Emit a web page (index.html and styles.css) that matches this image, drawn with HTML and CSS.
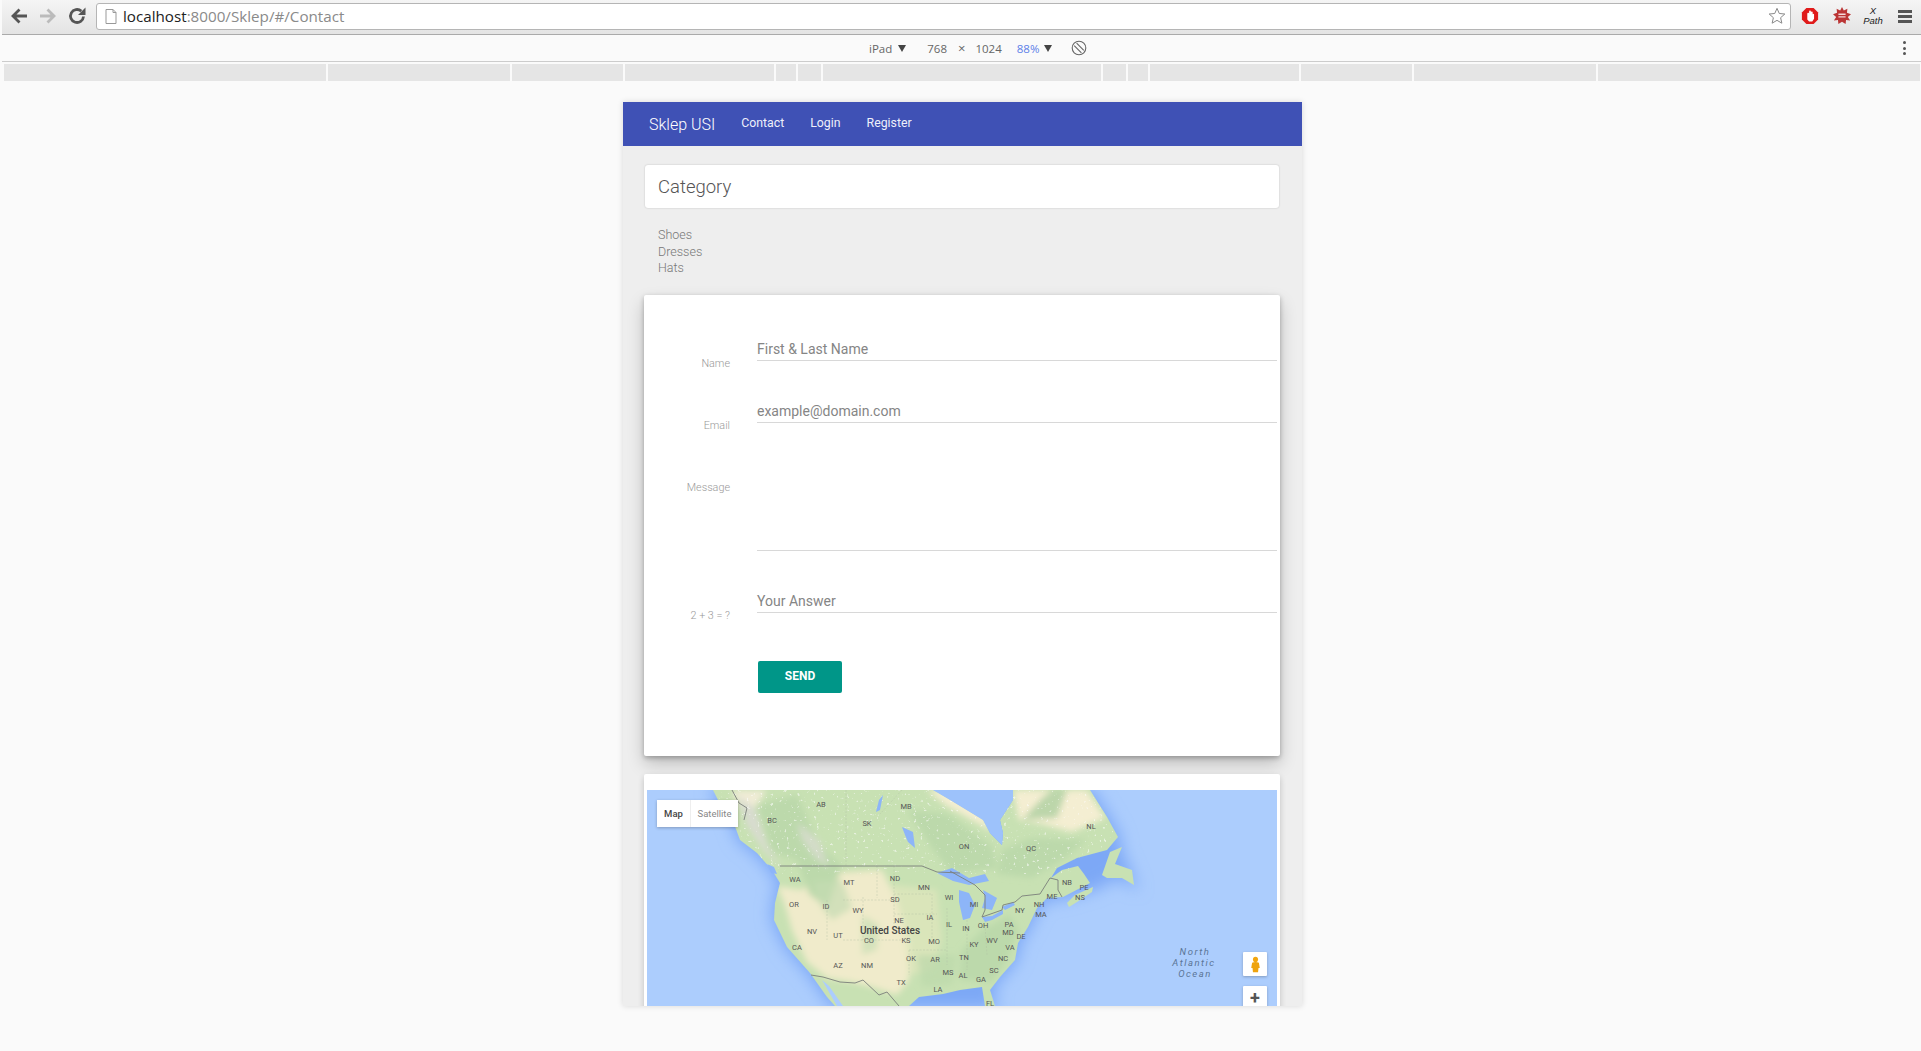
FILE: index.html
```html
<!DOCTYPE html>
<html lang="en">
<head>
    <meta charset="UTF-8">
    <title>Sklep USI - Contact</title>
    <link rel="stylesheet" href="styles.css">
</head>
<body>
    <div class="toolbar">
        <svg class="tool-icon" viewBox="0 0 20 20"><path d="M18 10H5M10.500 3.500L4 10l6.500 6.500" fill="none" stroke="#555" stroke-width="2.800"/></svg>
        <svg class="tool-icon" viewBox="0 0 20 20"><path d="M2 10h13M9.500 3.500L16 10l-6.500 6.500" fill="none" stroke="#bbb" stroke-width="2.800"/></svg>
        <svg class="tool-icon" viewBox="0 0 20 20"><path d="M16.500 10.500a6.500 6.500 0 1 1-2.200-5.400" fill="none" stroke="#555" stroke-width="2.800"/><path d="M11 9h7.500V1.500z" fill="#555"/></svg>
        <div class="address">
            <svg class="page-icon" viewBox="0 0 12 15"><path d="M1 .5h7l3 3v11H1zM8 .5v3h3" fill="#fff" stroke="#999"/></svg>
            <span class="host">localhost</span><span class="rest">:8000/Sklep/#/Contact</span>
            <svg class="star" viewBox="0 0 20 20"><path d="M10 1.500l2.500 5.700 6.200.6-4.700 4.100 1.400 6.100L10 14.800 4.600 18l1.400-6.100L1.300 7.800l6.200-.6z" fill="#fff" stroke="#888" stroke-width="1.100"/></svg>
        </div>
        <svg class="ext-icon ext-first" viewBox="0 0 20 20"><path d="M6 1h8l5 5v8l-5 5H6l-5-5V6z" fill="#e01b1b"/><path d="M7 14V7.500a1 1 0 0 1 2 0V5a1 1 0 0 1 2 0v1a1 1 0 0 1 2 0v2a1 1 0 0 1 1.500 0V13l-2 3H9z" fill="#fff"/></svg>
        <svg class="ext-icon" viewBox="0 0 20 20"><path d="M10 0l2 4 4-2-.5 4.500L20 8l-3.500 3 2.500 4-4.500-.5L14 19l-4-2.500L6 19l-.5-4.500L1 15l2.500-4L0 8l4.500-1.500L4 2l4 2z" fill="#bb3535"/><path d="M6 8h8M6 11h8" stroke="#f5d8d8" stroke-width="1.600"/></svg>
        <div class="xpath">X<br>Path</div>
        <div class="menu-icon"><i></i><i></i><i></i></div>
    </div>

    <div class="device-bar">
        <span class="device-name">iPad</span><span class="caret"></span>
        <span class="dim dim-w">768</span><span class="times">×</span><span class="dim">1024</span>
        <span class="zoom-val">88%</span><span class="caret caret-zoom"></span>
        <svg class="rotate" viewBox="0 0 16 16"><circle cx="8" cy="8" r="6.800" fill="none" stroke="#666" stroke-width="1.100"/><path d="M3.200 5.600l7.200 7.200M5.600 3.200l7.200 7.200" stroke="#666" stroke-width="1.100"/></svg>
        <div class="kebab"><i></i><i></i><i></i></div>
    </div>

    <div class="ruler">
        <div class="seg seg-a"></div>
        <div class="seg seg-b"></div>
        <div class="seg seg-c"></div>
        <div class="seg seg-d"></div>
        <div class="seg seg-e"></div>
        <div class="seg seg-f"></div>
        <div class="seg seg-g"></div>
        <div class="seg seg-f"></div>
        <div class="seg seg-e"></div>
        <div class="seg seg-d"></div>
        <div class="seg seg-c"></div>
        <div class="seg seg-b"></div>
        <div class="seg seg-l"></div>
    </div>

    <div class="stage">
        <div class="device">
            <nav class="navbar">
                <a class="brand">Sklep USI</a>
                <a class="nav-link">Contact</a>
                <a class="nav-link">Login</a>
                <a class="nav-link">Register</a>
            </nav>
            <div class="content">
                <div class="category-box">Category</div>
                <ul class="category-list">
                    <li>Shoes</li>
                    <li>Dresses</li>
                    <li>Hats</li>
                </ul>
                <form class="contact-card">
                    <div class="form-row">
                        <label>Name</label>
                        <div class="field">First &amp; Last Name</div>
                    </div>
                    <div class="form-row">
                        <label>Email</label>
                        <div class="field">example@domain.com</div>
                    </div>
                    <div class="form-row row-message">
                        <label>Message</label>
                        <div class="field field-area"></div>
                    </div>
                    <div class="form-row">
                        <label>2 + 3 = ?</label>
                        <div class="field">Your Answer</div>
                    </div>
                    <button class="send" type="button">SEND</button>
                </form>
                <div class="map-card">
                    <div class="map">
                        <svg class="map-svg" viewBox="0 0 630 216">
                            <defs>
                                <filter id="glow" x="-20%" y="-20%" width="140%" height="140%"><feGaussianBlur stdDeviation="8"/></filter>
                                <filter id="soft" x="-20%" y="-20%" width="140%" height="140%"><feGaussianBlur stdDeviation="3"/></filter>
                                <filter id="edge"><feGaussianBlur stdDeviation="0.500"/></filter>
                                <filter id="specks" x="0" y="0" width="100%" height="100%">
                                    <feTurbulence type="fractalNoise" baseFrequency="0.3" numOctaves="2" seed="7"/>
                                    <feColorMatrix values="0 0 0 0 1  0 0 0 0 1  0 0 0 0 1  0 0 0 9 -6.100"/>
                                    <feGaussianBlur stdDeviation="0.500"/>
                                </filter>
                                <clipPath id="land-clip">
                                    <path d="M66 0L75 18L83 23L93 50L110 63L125 80L133 93L128 113L127 130L140 157L163 183L180 207L188 216H262L272 207L296 204L313 200L335 197L338 216H348L343 200L353 187L368 170L371 153L381 137L390 118L400 108L416 107L443 93L437 84L431 76L415 80L404 88L410 78L430 68L460 60L471 47L460 27L443 0H366V10L353 30L356 43L355 55L343 43L336 30L303 10L286 0Z"/>
                                </clipPath>
                            </defs>
                            <rect width="630" height="216" fill="#accdfd"/>
                            <path filter="url(#glow)" fill="#7da8f6" stroke="#7da8f6" stroke-width="5" d="M66 0L75 18L83 23L93 50L110 63L125 80L133 93L128 113L127 130L140 157L163 183L180 207L188 216H348L343 200L353 187L368 170L371 153L381 137L390 118L400 108L416 107L450 97L470 85L487 95L472 60L471 47L460 27L443 0Z"/>
                            <g filter="url(#edge)">
                                <path fill="#c8e1b3" d="M66 0L75 18L83 23L93 50L110 63L125 80L133 93L128 113L127 130L140 157L163 183L180 207L188 216H262L272 207L296 204L313 200L335 197L338 216H348L343 200L353 187L368 170L371 153L381 137L390 118L400 108L416 107L443 93L437 84L431 76L415 80L404 88L410 78L430 68L460 60L471 47L460 27L443 0H366V10L353 30L356 43L355 55L343 43L336 30L303 10L286 0Z"/>
                                <path fill="#9dc2fb" d="M286 0L303 10L336 30L343 43L355 55L356 43L353 30L366 10V0Z"/>
                                <path fill="#c8e1b3" d="M455 85L463 62L475 57L468 74L485 80L487 95L475 88L460 88Z"/>
                                <path fill="#c8e1b3" d="M420 113L428 105L446 97L445 102L430 112L422 117Z"/>
                            </g>
                            <g clip-path="url(#land-clip)">
                                <g filter="url(#soft)">
                                    <!-- tan of the US southwest -->
                                    <path fill="#f0ebcb" d="M130 96L155 100L170 84L200 82L235 80L250 110L262 150L262 190L250 205L225 197L205 192L180 188L160 172L145 140L138 115Z"/>
                                    <path fill="#e6e8c0" d="M245 95L290 100L295 150L285 180L262 185Z" opacity=".6"/>
                                    <!-- north, pale coast -->
                                    <path fill="#f4eed2" d="M366 0H440L458 28L425 42L395 34L372 30Z"/>
                                    <path fill="#f4eed2" d="M280 0H298L336 24L345 42L332 34L300 16Z"/>
                                    <path fill="#f0ecd6" d="M85 0H120L105 22L92 18Z"/>
                                    <!-- forest -->
                                    <path fill="#bcd9ab" d="M110 15L150 5L172 55L195 76L180 118L162 104L150 70L125 62Z"/>
                                    <path fill="#bcd9ab" d="M260 20L300 24L345 56L350 78L305 84L285 58Z"/>
                                    <path fill="#bcd9ab" d="M355 60L385 48L440 50L415 70L385 88L350 84Z"/>
                                    <path fill="#bcd9ab" d="M335 140L362 125L372 140L360 170L345 192L312 190L315 160Z"/>
                                    <path fill="#bcd9ab" d="M270 165L310 165L305 195L275 197Z" opacity=".7"/>
                                    <path fill="#c8deb4" d="M215 125L232 135L230 160L215 165Z" opacity=".7"/>
                                    <path fill="#c4dcb2" d="M165 92L195 90L205 118L185 130L175 118Z" opacity=".7"/>
                                    <path fill="#bcd6aa" d="M375 30L395 8L405 0H420L410 28Z"/>
                                    <!-- ranges -->
                                    <path fill="#d8dccf" d="M90 6L108 18L120 55L135 78L118 62L100 36Z"/>
                                    <path fill="#d3dcc8" d="M150 32L172 50L182 78L168 68L155 50Z"/>
                                </g>
                                <rect y="0" width="480" height="84" filter="url(#specks)" opacity=".55"/>
                            </g>
                            <g filter="url(#edge)" fill="#8db5f8">
                                <!-- lakes -->
                                <path d="M290 83L305 78L322 88L338 84L342 91L322 95L306 91Z"/>
                                <path d="M312 100L322 103L328 115L323 128L316 130L312 112Z"/>
                                <path d="M336 100L350 108L345 120L335 118L338 108Z"/>
                                <path d="M335 127L345 126L356 120L356 124L345 130L338 132Z"/>
                                <path d="M355 117L366 112L368 115L358 120Z"/>
                                <path d="M255 37L266 42L268 58L261 52L258 45Z"/>
                                <path d="M120 74L127 77L130 84L124 83Z"/>
                                <path d="M232 10L236 5L233 20L229 22Z"/>
                                <path d="M175 190L182 196L196 216H190Z" fill="#accdfd"/>
                            </g>
                            <g fill="none" stroke="#aebba0" stroke-width=".5" stroke-dasharray="2 1.500" opacity=".75">
                                <!-- state and province lines -->
                                <path d="M199 0V76M255 0L233 24M230 76V108M196 110H247M247 76V140M216 107V150M180 110V150M247 104H285M247 124H290M285 104V150M300 118V175M262 160H300M196 150H262M262 160V185M320 130V180M338 135L340 165"/>
                            </g>
                            <g fill="none" stroke="#7b7f7b" stroke-width=".9">
                                <path d="M85 0L92 13L100 18L97 30"/>
                                <path d="M133 76H275L290 82L313 83"/>
                                <path d="M303 81L328 95L338 105L338 120L335 127L355 120L356 115L368 112L375 106L393 104L403 88L411 90L411 100L415 107"/>
                                <path d="M164 185L176 187L193 192L208 193L216 190L232 205L240 202L252 216"/>
                            </g>
                            <g class="map-labels">
                                <text x="174" y="17">AB</text><text x="259" y="19">MB</text><text x="125" y="33">BC</text><text x="220" y="36">SK</text>
                                <text x="148" y="92">WA</text><text x="202" y="95">MT</text><text x="248" y="91">ND</text><text x="277" y="100">MN</text><text x="302" y="110">WI</text>
                                <text x="147" y="117">OR</text><text x="179" y="119">ID</text><text x="211" y="123">WY</text><text x="248" y="112">SD</text><text x="283" y="130">IA</text>
                                <text x="252" y="133">NE</text><text x="302" y="137">IL</text><text x="165" y="144">NV</text><text x="191" y="148">UT</text>
                                <text x="222" y="153">CO</text><text x="259" y="153">KS</text><text x="287" y="154">MO</text><text x="150" y="160">CA</text>
                                <text x="191" y="178">AZ</text><text x="220" y="178">NM</text><text x="264" y="171">OK</text><text x="288" y="172">AR</text><text x="301" y="185">MS</text>
                                <text x="254" y="195">TX</text><text x="291" y="202">LA</text>
                                <text x="317" y="59">ON</text><text x="384" y="61">QC</text><text x="444" y="39">NL</text>
                                <text x="420" y="95">NB</text><text x="437" y="100">PE</text><text x="433" y="110">NS</text><text x="405" y="109">ME</text>
                                <text x="392" y="117">NH</text><text x="373" y="123">NY</text><text x="394" y="127">MA</text><text x="327" y="117">MI</text>
                                <text x="319" y="141">IN</text><text x="336" y="138">OH</text><text x="362" y="137">PA</text><text x="361" y="145">MD</text><text x="374" y="149">DE</text>
                                <text x="345" y="153">WV</text><text x="327" y="157">KY</text><text x="363" y="160">VA</text><text x="317" y="170">TN</text><text x="356" y="171">NC</text>
                                <text x="347" y="183">SC</text><text x="316" y="188">AL</text><text x="334" y="192">GA</text><text x="343" y="216">FL</text>
                                <text class="map-country" x="243" y="144">United States</text>
                                <text class="map-ocean" x="548" y="165">North</text>
                                <text class="map-ocean" x="547" y="176">Atlantic</text>
                                <text class="map-ocean" x="548" y="187">Ocean</text>
                            </g>
                        </svg>
                        <div class="map-type">
                            <span class="map-btn map-active">Map</span>
                            <span class="map-btn map-sat">Satellite</span>
                        </div>
                        <div class="map-ctrl pegman">
                            <svg viewBox="0 0 12 20"><circle cx="6" cy="4" r="3" fill="#f2a60f"/><path d="M2 8q4-2 8 0l1 6H9.500l-.5 5H3l-.5-5H1z" fill="#eea30e"/></svg>
                        </div>
                        <div class="map-ctrl zoom-in">+</div>
                    </div>
                </div>
            </div>
        </div>
    </div>
</body>
</html>
```

FILE: styles.css
```css
html, body {
    margin: 0;
    height: 100%;
}
body {
    font-family: Roboto, Arial, sans-serif;
    background: #fafafa;
    overflow: hidden;
    padding-left: 2px;
    box-sizing: border-box;
}

/* browser chrome */
.toolbar {
    height: 32px;
    display: flex;
    align-items: center;
    padding: 0 9px 2px 7px;
    background: linear-gradient(#f5f5f5, #e4e4e4);
    border-bottom: 1px solid #aaa;
}
.tool-icon {
    width: 20px;
    height: 20px;
    margin-right: 9px;
    flex: none;
}
.address {
    flex: 1;
    height: 25px;
    padding: 0 4px 0 8px;
    display: flex;
    align-items: center;
    background: #fff;
    border: 1px solid #b5b5b5;
    border-radius: 3px;
    font-family: "Open Sans", Arial, sans-serif;
    font-size: 15.200px;
}
.page-icon {
    width: 12px;
    height: 15px;
    margin-right: 6px;
}
.host {
    color: #222;
}
.rest {
    color: #8a8a8a;
}
.star {
    width: 18px;
    height: 18px;
    margin-left: auto;
}
.ext-icon {
    width: 18px;
    height: 18px;
    margin-left: 14px;
    flex: none;
}
.ext-first {
    margin-left: 10px;
}
.xpath {
    width: 22px;
    margin-left: 11px;
    font-family: "Liberation Sans", Arial, sans-serif;
    font-style: italic;
    font-size: 9.500px;
    line-height: 10px;
    text-align: center;
    color: #222;
}
.menu-icon {
    width: 14px;
    margin-left: 14px;
}
.menu-icon i {
    display: block;
    height: 3px;
    margin: 2px 0;
    background: #555;
}

.device-bar {
    position: relative;
    height: 26px;
    padding-left: 867px;
    display: flex;
    align-items: center;
    background: #fafafa;
    border-bottom: 1px solid #ccc;
    font-family: "Open Sans", Arial, sans-serif;
    font-size: 11.500px;
    color: #666;
}
.caret {
    width: 0;
    height: 0;
    margin-left: 6px;
    border-left: 4px solid transparent;
    border-right: 4px solid transparent;
    border-top: 7px solid #444;
}
.caret-zoom {
    margin-left: 5px;
}
.dim-w {
    margin-left: 21px;
}
.times {
    margin: 0 10px 0 11px;
    font-size: 13px;
}
.zoom-val {
    margin-left: 15px;
    color: #5c7ee8;
}
.rotate {
    width: 16px;
    height: 16px;
    margin-left: 19px;
}
.kebab {
    position: absolute;
    right: 15px;
    top: 6px;
}
.kebab i {
    display: block;
    width: 3px;
    height: 3px;
    margin-bottom: 2.500px;
    border-radius: 50%;
    background: #555;
}

.ruler {
    height: 17px;
    margin: 2px 1px 0 2px;
    display: flex;
    gap: 2px;
}
.seg {
    background: #e5e5e5;
}
.seg-a { width: 322px; }
.seg-b { width: 182px; }
.seg-c { width: 111px; }
.seg-d { width: 149px; }
.seg-e { width: 20px; }
.seg-f { width: 23px; }
.seg-g { width: 278px; }
.seg-l { flex: 1; }

/* device viewport */
.stage {
    display: flex;
    padding: 21px 0 0 621px;
}
.device {
    width: 679px;
    height: 904px;
    overflow: hidden;
    background: #eee;
    box-shadow: 0 0 6px rgba(0, 0, 0, 0.14);
}
.navbar {
    height: 44px;
    display: flex;
    align-items: center;
    padding-left: 26px;
    background: #3f51b5;
    color: #fff;
}
.brand {
    margin-right: 26px;
    font-size: 16px;
    font-weight: 300;
}
.nav-link {
    margin-right: 26px;
    margin-top: -2px;
    font-size: 12.300px;
    color: #eef0fb;
}
.content {
    padding: 19px 22px 0 21px;
}
.category-box {
    height: 43px;
    margin: 0 1px;
    padding-left: 13px;
    line-height: 44px;
    background: #fff;
    border-radius: 3px;
    box-shadow: 0 0 2px rgba(0, 0, 0, 0.2);
    font-size: 18.500px;
    font-weight: 300;
    color: #555;
}
.category-list {
    list-style: none;
    margin: 19px 0 0;
    padding: 0 0 0 14px;
    font-size: 12.500px;
    font-weight: 300;
    line-height: 16.500px;
    color: #777;
}
.contact-card {
    height: 461px;
    margin-top: 18.500px;
    padding: 36px 3px 0 0;
    box-sizing: border-box;
    background: #fff;
    border-radius: 2px;
    box-shadow: 0 8px 17px rgba(0, 0, 0, 0.2), 0 2px 5px rgba(0, 0, 0, 0.26);
}
.form-row {
    display: flex;
    height: 62px;
}
.form-row label {
    width: 86px;
    margin-top: 26px;
    text-align: right;
    font-size: 10.800px;
    font-weight: 300;
    color: #999;
}
.field {
    flex: 1;
    height: 30px;
    margin-left: 27px;
    padding-bottom: 3px;
    box-sizing: border-box;
    display: flex;
    align-items: flex-end;
    border-bottom: 1px solid #d8d8d8;
    line-height: 16px;
    font-size: 14px;
    color: #858585;
}
.row-message {
    height: 128px;
}
.field-area {
    height: 96px;
}
.send {
    display: block;
    width: 84px;
    height: 32px;
    margin: 16px 0 0 114px;
    padding: 0 0 2px;
    border: 0;
    border-radius: 2px;
    background: #009688;
    color: #fff;
    font-family: Roboto, Arial, sans-serif;
    font-size: 12px;
    font-weight: 700;
}
.map-card {
    height: 300px;
    margin-top: 18px;
    padding: 16px 3px 0;
    background: #fff;
    border-radius: 2px;
    box-shadow: 0 3px 6px rgba(0, 0, 0, 0.2);
}

/* map */
.map {
    position: relative;
    height: 216px;
    overflow: hidden;
}
.map-svg {
    display: block;
    width: 630px;
    height: 216px;
}
.map-labels text {
    font-family: Roboto, Arial, sans-serif;
    font-size: 7.500px;
    fill: #555;
    text-anchor: middle;
}
.map-labels .map-country {
    font-size: 10px;
    font-weight: 500;
    fill: #444;
}
.map-labels .map-ocean {
    font-size: 9.500px;
    font-style: italic;
    letter-spacing: 1.500px;
    fill: #5b7596;
}
.map-type {
    position: absolute;
    left: 10px;
    top: 10px;
    display: flex;
    gap: 1px;
    background: #eee;
    box-shadow: 0 1px 3px rgba(0, 0, 0, 0.25);
}
.map-btn {
    height: 27px;
    line-height: 27px;
    text-align: center;
    background: #fff;
    font-size: 9.500px;
    color: #888;
}
.map-active {
    width: 33px;
    font-weight: 500;
    color: #444;
}
.map-sat {
    width: 47px;
}
.map-ctrl {
    position: absolute;
    left: 596px;
    width: 24px;
    height: 24px;
    background: #fff;
    border-radius: 1px;
    box-shadow: 0 1px 3px rgba(0, 0, 0, 0.25);
}
.pegman {
    top: 162px;
    display: flex;
    align-items: center;
    justify-content: center;
}
.pegman svg {
    width: 11px;
    height: 17px;
}
.zoom-in {
    top: 196px;
    text-align: center;
    line-height: 23px;
    font-size: 18px;
    font-weight: 700;
    color: #555;
}
```
